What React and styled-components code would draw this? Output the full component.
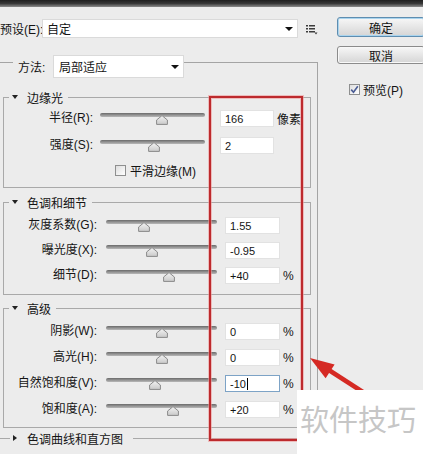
import React from "react";
import styled, { createGlobalStyle } from "styled-components";

const GlobalStyle = createGlobalStyle`
  html, body {
    margin: 0;
    padding: 0;
    background: #ececec;
  }
  body {
    font-family: "Liberation Sans", "Noto Sans CJK SC", sans-serif;
    font-size: 12px;
    color: #141414;
  }
`;

const wide = { label: 89, sliderGap: 7, slider: 105, inputGap: 15, input: 54 };
const narrow = { label: 93, sliderGap: 9, slider: 111, inputGap: 8, input: 55 };

const sections = [
  {
    title: "边缘光",
    layout: wide,
    gap: 0,
    padTop: 5,
    rowGap: 10,
    padBottom: 10,
    rows: [
      { label: "半径(R):", value: "166", unit: "像素", pos: 0.59 },
      { label: "强度(S):", value: "2", pos: 0.51 },
    ],
    checkbox: "平滑边缘(M)",
  },
  {
    title: "色调和细节",
    layout: narrow,
    gap: 14,
    padTop: 7,
    rowGap: 8,
    padBottom: 10,
    rows: [
      { label: "灰度系数(G):", value: "1.55", pos: 0.34 },
      { label: "曝光度(X):", value: "-0.95", pos: 0.41 },
      { label: "细节(D):", value: "+40", unit: "%", pos: 0.57 },
    ],
  },
  {
    title: "高级",
    layout: narrow,
    gap: 13,
    padTop: 7,
    rowGap: 9,
    padBottom: 9,
    rows: [
      { label: "阴影(W):", value: "0", unit: "%", pos: 0.5 },
      { label: "高光(H):", value: "0", unit: "%", pos: 0.5 },
      { label: "自然饱和度(V):", value: "-10", unit: "%", pos: 0.44, focus: true },
      { label: "饱和度(A):", value: "+20", unit: "%", pos: 0.6 },
    ],
  },
];

function Thumb() {
  return (
    <svg width="12" height="10" viewBox="0 0 12 10">
      <defs>
        <linearGradient id="thumbFill" x1="0" y1="0" x2="0" y2="1">
          <stop offset="0" stopColor="#f4f4f4" />
          <stop offset="1" stopColor="#c9c9c9" />
        </linearGradient>
      </defs>
      <path d="M6 0.6 L11.4 5 V9.4 H0.6 V5 Z" fill="url(#thumbFill)" stroke="#8a8a8a" strokeWidth="1" />
    </svg>
  );
}

function ListIcon() {
  return (
    <svg width="12" height="11" viewBox="0 0 12 11">
      {[1, 4, 7].map((y) => (
        <g key={y} fill="#3b3b3b">
          <rect x="0" y={y} width="2" height="1.5" />
          <rect x="3" y={y} width="6" height="1.5" />
        </g>
      ))}
      <path d="M8.5 8.5 H11.5 L10 10.5 Z" fill="#3b3b3b" />
    </svg>
  );
}

function CheckMark() {
  return (
    <svg width="9" height="9" viewBox="0 0 9 9">
      <path d="M1.2 4.6 L3.5 7.2 L7.8 1.2" fill="none" stroke="#4b5d95" strokeWidth="1.6" />
    </svg>
  );
}

function Pointer() {
  return (
    <PointerSvg width="123" height="70" viewBox="0 0 123 70">
      <line x1="28" y1="24.5" x2="100" y2="71" stroke="#d52a24" strokeWidth="4.5" />
      <path d="M10 13 L25.6 33.2 L34.6 19.4 Z" fill="#d52a24" />
    </PointerSvg>
  );
}

function SliderRow({ row, layout }) {
  return (
    <Row>
      <RowLabel $w={layout.label}>{row.label}</RowLabel>
      <Slider $w={layout.slider} $ml={layout.sliderGap}>
        <Track />
        <ThumbHolder style={{ left: `${row.pos * 100}%` }}>
          <Thumb />
        </ThumbHolder>
      </Slider>
      <ValueBox $w={layout.input} $ml={layout.inputGap} $focus={row.focus}>
        {row.value}
        {row.focus && <Caret />}
      </ValueBox>
      {row.unit && <Unit>{row.unit}</Unit>}
    </Row>
  );
}

export default function App() {
  return (
    <>
      <GlobalStyle />
      <Window>
        <TitleStrip />
        <Main>
          <LeftCol>
            <PresetRow>
              <PresetLabel>预设(E):</PresetLabel>
              <Combo $w={256} $h={19}>
                自定
                <DropArrow />
              </Combo>
              <IconSlot>
                <ListIcon />
              </IconSlot>
            </PresetRow>

            <Group>
              <GroupLegend>
                <MethodLabel>方法:</MethodLabel>
                <Combo $w={131} $h={23} $pad={5}>
                  局部适应
                  <DropArrow />
                </Combo>
              </GroupLegend>

              <Sections>
                {sections.map((s) => (
                  <Section key={s.title} $gap={s.gap} $padBottom={s.padBottom}>
                    <SectionLegend>
                      <Caret3 />
                      <span>{s.title}</span>
                    </SectionLegend>
                    <SectionBody $padTop={s.padTop} $rowGap={s.rowGap}>
                      {s.rows.map((r) => (
                        <SliderRow key={r.label} row={r} layout={s.layout} />
                      ))}
                      {s.checkbox && (
                        <CheckRow>
                          <CheckBox />
                          <span>{s.checkbox}</span>
                        </CheckRow>
                      )}
                    </SectionBody>
                  </Section>
                ))}
                <CollapsedHeader>
                  <CollapsedLegend>
                    <SideCaret />
                    <span>色调曲线和直方图</span>
                  </CollapsedLegend>
                </CollapsedHeader>
              </Sections>
            </Group>
          </LeftCol>

          <RightCol>
            <Button $h={20} $primary>确定</Button>
            <Button $h={18} $mt={9}>取消</Button>
            <PreviewRow>
              <CheckBox>
                <CheckMark />
              </CheckBox>
              <span>预览(P)</span>
            </PreviewRow>
          </RightCol>
        </Main>

        <Highlight />
        <Pointer />
        <Watermark>软件技巧</Watermark>
      </Window>
    </>
  );
}

const Window = styled.div`
  position: relative;
  width: 423px;
  height: 454px;
  overflow: hidden;
  background: #ececec;
  display: flex;
  flex-direction: column;
`;

const TitleStrip = styled.div`
  flex: none;
  height: 7px;
  background: linear-gradient(#1f1f1f 0%, #383838 50%, #8c8c8c 100%);
`;

const Main = styled.div`
  flex: 1;
  display: flex;
  align-items: flex-start;
`;

const LeftCol = styled.div`
  flex: none;
  width: 318px;
  align-self: stretch;
  display: flex;
  flex-direction: column;
`;

const PresetRow = styled.div`
  display: flex;
  align-items: center;
  margin-top: 12px;
  height: 19px;
`;

const PresetLabel = styled.span`
  flex: none;
  width: 42px;
  white-space: nowrap;
`;

const Combo = styled.div`
  box-sizing: border-box;
  flex: none;
  width: ${(p) => p.$w}px;
  height: ${(p) => p.$h}px;
  padding: 0 4px 0 ${(p) => p.$pad || 4}px;
  background: #fff;
  border: 1px solid #dadada;
  display: flex;
  align-items: center;
  justify-content: space-between;
  white-space: nowrap;
`;

const DropArrow = styled.span`
  width: 0;
  height: 0;
  border-left: 4px solid transparent;
  border-right: 4px solid transparent;
  border-top: 4px solid #111;
`;

const IconSlot = styled.span`
  display: flex;
  margin-left: 8px;
  margin-top: 1px;
`;

const Group = styled.div`
  flex: 1;
  margin-top: 24px;
  border-top: 1px solid #a4a4a4;
  border-right: 1px solid #a4a4a4;
  display: flex;
  flex-direction: column;
`;

const GroupLegend = styled.div`
  align-self: flex-start;
  display: flex;
  align-items: center;
  height: 23px;
  margin: -8px 0 0 13px;
  padding-left: 5px;
  background: #ececec;
`;

const MethodLabel = styled.span`
  width: 35px;
  white-space: nowrap;
`;

const Sections = styled.div`
  display: flex;
  flex-direction: column;
  margin-top: 19px;
  padding: 0 6px 0 3px;
`;

const Section = styled.div`
  display: flex;
  flex-direction: column;
  margin-top: ${(p) => p.$gap}px;
  padding-bottom: ${(p) => p.$padBottom}px;
  border: 1px solid #a9a9a9;
`;

const SectionLegend = styled.div`
  align-self: flex-start;
  display: flex;
  align-items: center;
  gap: 9px;
  height: 16px;
  margin: -9px 0 0 5px;
  padding: 0 5px 0 3px;
  background: #ececec;
  white-space: nowrap;
`;

const Caret3 = styled.span`
  width: 0;
  height: 0;
  border-left: 3px solid transparent;
  border-right: 3px solid transparent;
  border-top: 4px solid #222;
`;

const SideCaret = styled.span`
  width: 0;
  height: 0;
  border-top: 3px solid transparent;
  border-bottom: 3px solid transparent;
  border-left: 4px solid #222;
`;

const SectionBody = styled.div`
  display: flex;
  flex-direction: column;
  gap: ${(p) => p.$rowGap}px;
  padding-top: ${(p) => p.$padTop}px;
`;

const Row = styled.div`
  display: flex;
  align-items: center;
  height: 17px;
`;

const RowLabel = styled.span`
  flex: none;
  width: ${(p) => p.$w}px;
  text-align: right;
  white-space: nowrap;
  line-height: 17px;
`;

const Slider = styled.div`
  position: relative;
  flex: none;
  align-self: stretch;
  width: ${(p) => p.$w}px;
  margin-left: ${(p) => p.$ml}px;
`;

const Track = styled.div`
  margin-top: 3px;
  height: 4px;
  border-radius: 2px;
  background: linear-gradient(#6a6a6a, #969696 55%, #b8b8b8);
`;

const ThumbHolder = styled.div`
  position: absolute;
  top: 5px;
  margin-left: -6px;
  display: flex;
`;

const ValueBox = styled.div`
  box-sizing: border-box;
  flex: none;
  display: flex;
  align-items: center;
  width: ${(p) => p.$w}px;
  height: 17px;
  margin-left: ${(p) => p.$ml}px;
  padding-left: 4px;
  background: #fff;
  border: 1px solid ${(p) => (p.$focus ? "#7da3c6" : "#e2e2e2")};
  font-family: "Liberation Sans", sans-serif;
  font-size: 11px;
`;

const Caret = styled.span`
  width: 1px;
  height: 12px;
  margin-left: 1px;
  background: #000;
`;

const Unit = styled.span`
  margin-left: 3px;
  white-space: nowrap;
`;

const CheckRow = styled.div`
  display: flex;
  align-items: center;
  gap: 4px;
  height: 14px;
  margin: -1px 0 0 111px;
  white-space: nowrap;
`;

const CheckBox = styled.span`
  box-sizing: border-box;
  flex: none;
  width: 11px;
  height: 11px;
  border: 1px solid #8e8f8f;
  background: linear-gradient(135deg, #dedede, #ffffff);
  display: flex;
  align-items: center;
  justify-content: center;
`;

const CollapsedHeader = styled.div`
  margin: 10px 0 0 -3px;
  border-top: 1px solid #a9a9a9;
  display: flex;
`;

const CollapsedLegend = styled.div`
  display: flex;
  align-items: center;
  gap: 10px;
  height: 16px;
  margin: -9px 0 0 10px;
  padding: 0 10px 0 3px;
  background: #ececec;
  white-space: nowrap;
`;

const RightCol = styled.div`
  flex: none;
  width: 88px;
  margin: 10px 0 0 19px;
  display: flex;
  flex-direction: column;
`;

const Button = styled.div`
  box-sizing: border-box;
  height: ${(p) => p.$h}px;
  margin-top: ${(p) => p.$mt || 0}px;
  border: 1px solid ${(p) => (p.$primary ? "#5e8db0" : "#8b8b8b")};
  border-radius: 3px;
  background: linear-gradient(#f7f7f7, #e6e6e6 50%, #d5d5d5);
  box-shadow: ${(p) => (p.$primary ? "inset 0 0 0 1px #a9d4ee" : "inset 0 0 0 1px #f8f8f8")};
  display: flex;
  align-items: center;
  justify-content: center;
  font-family: "Noto Sans CJK SC", sans-serif;
`;

const PreviewRow = styled.div`
  display: flex;
  align-items: center;
  gap: 3px;
  margin: 17px 0 0 12px;
  white-space: nowrap;
`;

const Highlight = styled.div`
  position: absolute;
  left: 209px;
  top: 96px;
  width: 94px;
  height: 345px;
  box-sizing: border-box;
  border: 2px solid #bd2a2d;
  box-shadow: 0 0 0 1px rgba(238, 150, 150, 0.55), inset 0 0 0 1px rgba(238, 150, 150, 0.55);
  pointer-events: none;
`;

const PointerSvg = styled.svg`
  position: absolute;
  left: 300px;
  top: 345px;
  pointer-events: none;
`;

const Watermark = styled.div`
  position: absolute;
  left: 297px;
  top: 390px;
  width: 126px;
  height: 64px;
  box-sizing: border-box;
  padding: 13px 0 0 3px;
  background: #fff;
  color: #c6c6c6;
  font-family: "Noto Sans CJK SC", sans-serif;
  font-size: 29px;
  line-height: 1.05;
  white-space: nowrap;
`;
